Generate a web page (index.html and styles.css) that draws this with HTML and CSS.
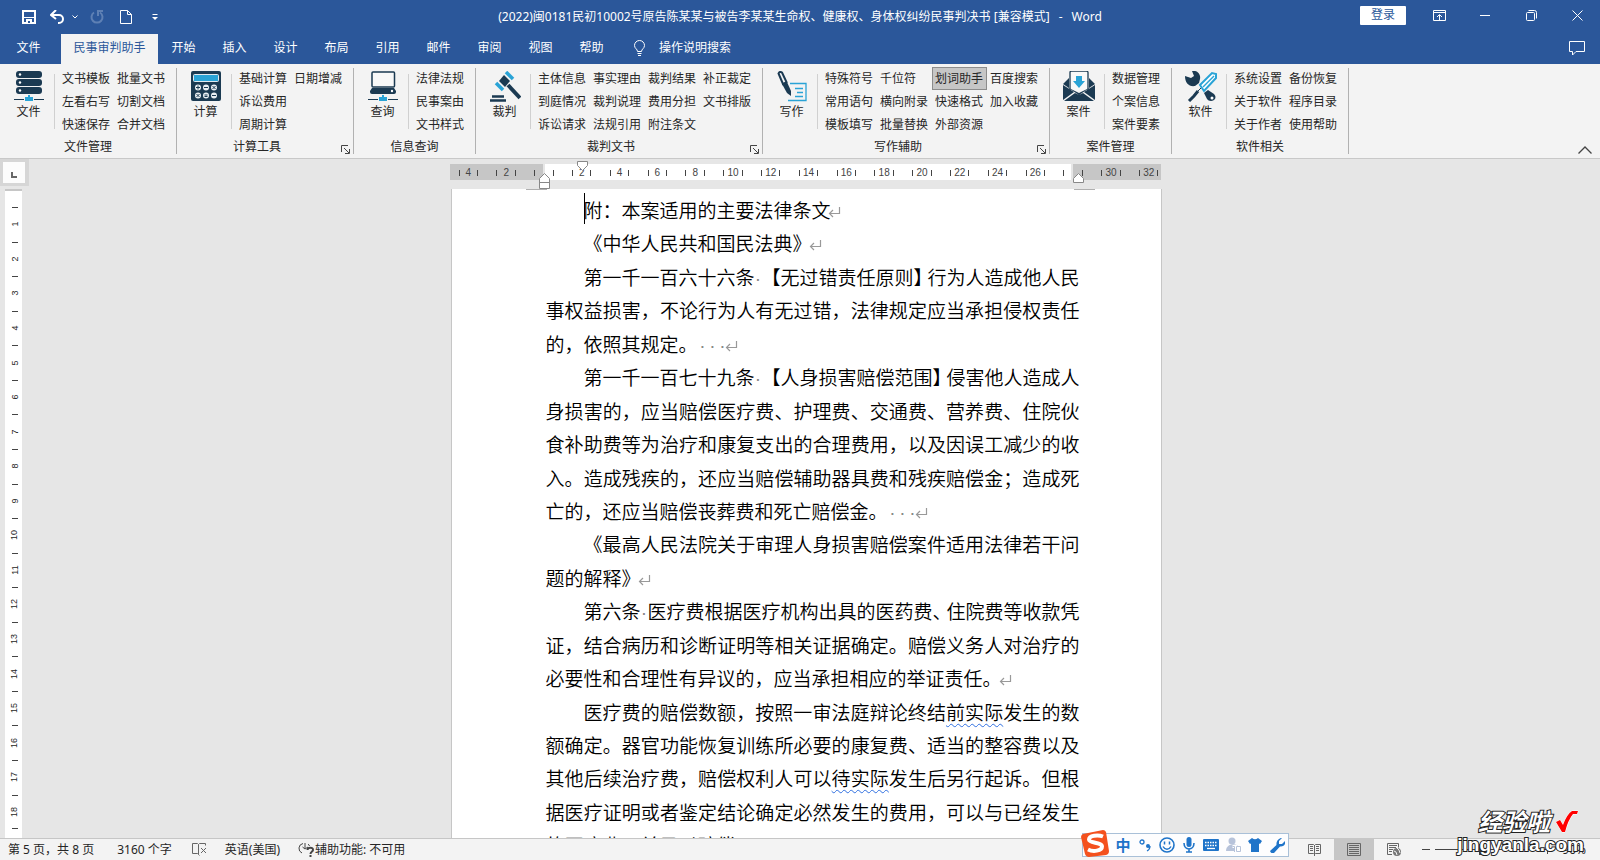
FILE: index.html
```html
<!DOCTYPE html>
<html lang="zh-CN">
<head>
<meta charset="utf-8">
<title>民事判决书 - Word</title>
<link rel="stylesheet" href="styles.css">
</head>
<body>
<svg class="defs" aria-hidden="true">
  <symbol id="ret" viewBox="0 0 13 12"><path d="M11.5 1v6.5H1.5M5 4L1.5 7.5 5 11" fill="none" stroke="#999" stroke-width="1.2"/></symbol>
  <symbol id="launch" viewBox="0 0 9 9"><path d="M.5 7V.5H7M3 3l5 5M8.500 4v4.500H4" fill="none" stroke="#444"/></symbol>
</svg>

<header class="head">
  <div class="titlebar">
    <div class="quick">
      <button class="q-save" aria-label="保存"><svg width="14" height="14" viewBox="0 0 14 14"><path d="M1 1h12v12H1z" fill="none" stroke="#fff" stroke-width="2"/><path d="M2 7.500h10" stroke="#fff"/><path d="M4 9h6v4H4z" fill="#fff"/><path d="M6 11h2v2H6z" fill="#2b579a"/></svg></button>
      <button class="q-undo" aria-label="撤消"><svg width="15" height="14" viewBox="0 0 15 14"><path d="M2 5h7a4 4 0 0 1 0 8H8" fill="none" stroke="#fff" stroke-width="2"/><path d="M6 0L1 5l5 4" fill="none" stroke="#fff" stroke-width="2"/></svg></button>
      <button class="q-drop" aria-label="撤消列表"><svg width="6" height="4" viewBox="0 0 6 4"><path d="M.5.5L3 3 5.500.5" fill="none" stroke="#fff"/></svg></button>
      <button class="q-redo" aria-label="恢复"><svg width="14" height="14" viewBox="0 0 14 14"><path d="M4 2.500A5.500 5.500 0 1 0 10 2.500" fill="none" stroke="#5e80b4" stroke-width="2"/><path d="M8 6V1h5" fill="none" stroke="#5e80b4" stroke-width="2"/></svg></button>
      <button class="q-new" aria-label="新建"><svg width="12" height="14" viewBox="0 0 12 14"><path d="M.5.5h7l4 4v9H.5zM7.500.5v4h4" fill="none" stroke="#fff"/></svg></button>
      <button class="q-more" aria-label="自定义"><svg width="6" height="6" viewBox="0 0 6 6"><path d="M.5.5h5" stroke="#fff"/><path d="M0 3h6L3 6z" fill="#fff"/></svg></button>
    </div>
    <h1 class="doc-title">(2022)闽0181民初10002号原告陈某某与被告李某某生命权、健康权、身体权纠纷民事判决书 [兼容模式]<span class="dash">-</span>Word</h1>
    <div class="window-tools">
      <button class="login">登录</button>
      <button class="win" aria-label="功能区显示选项"><svg width="13" height="11" viewBox="0 0 13 11"><path d="M.5.5h12v10H.5zM.5 2.500h12M6.500 10V5M4 7l2.500-2.500L9 7" fill="none" stroke="#fff"/></svg></button>
      <button class="win" aria-label="最小化"><svg width="10" height="11" viewBox="0 0 10 11"><path d="M0 5.500h10" stroke="#fff"/></svg></button>
      <button class="win" aria-label="还原"><svg width="11" height="11" viewBox="0 0 11 11"><rect x=".5" y="2.500" width="8" height="8" rx="1" fill="none" stroke="#fff"/><path d="M2.500.5h6a2 2 0 0 1 2 2v6" fill="none" stroke="#fff"/></svg></button>
      <button class="win" aria-label="关闭"><svg width="11" height="11" viewBox="0 0 11 11"><path d="M.5.5l10 10M10.500.5l-10 10" stroke="#fff"/></svg></button>
    </div>
  </div>
  <nav class="tabs">
    <button class="tab file">文件</button>
    <button class="tab active">民事审判助手</button>
    <button class="tab">开始</button>
    <button class="tab">插入</button>
    <button class="tab">设计</button>
    <button class="tab">布局</button>
    <button class="tab">引用</button>
    <button class="tab">邮件</button>
    <button class="tab">审阅</button>
    <button class="tab">视图</button>
    <button class="tab">帮助</button>
    <button class="tab tell"><svg width="11" height="16" viewBox="0 0 11 16"><path d="M3.500 11.500c0-2.500-3-3-3-6a5 5 0 0 1 10 0c0 3-3 3.500-3 6zM3.500 13.500h4M4 15.500h3" fill="none" stroke="#fff"/></svg>操作说明搜索</button>
    <button class="comment" aria-label="批注"><svg width="16" height="15" viewBox="0 0 16 15"><path d="M.5.5h15v10H7l-3.500 3.500v-3.500h-3z" fill="none" stroke="#fff"/></svg></button>
  </nav>
</header>

<section class="ribbon">
  <div class="group">
    <div class="tools">
      <button class="big"><svg width="30" height="31" viewBox="0 0 30 31"><g fill="#1b3a52"><rect x="2" y="0" width="26" height="7" rx="3"/><rect x="2" y="8" width="26" height="7" rx="3"/><rect x="2" y="16" width="26" height="7" rx="3"/></g><g fill="#fff"><circle cx="6" cy="3.500" r="1.200"/><circle cx="6" cy="11.500" r="1.200"/><circle cx="6" cy="19.500" r="1.200"/></g><path d="M0 28.500h10M20 28.500h10" stroke="#1b3a52"/><path d="M14 24h2v2h3v4h-8v-4h3z" fill="#29a3d6"/></svg>文件</button>
      <div class="cmds"><button>文书模板</button><button>左看右写</button><button>快速保存</button><button>批量文书</button><button>切割文档</button><button>合并文档</button></div>
    </div>
    <div class="caption"><span>文件管理</span></div>
  </div>
  <div class="group">
    <div class="tools">
      <button class="big"><svg width="30" height="31" viewBox="0 0 30 31"><rect x="0" y="0" width="30" height="30" rx="2" fill="#1b3a52"/><rect x="2.500" y="3.500" width="25" height="7" rx="1" fill="#29a3d6" stroke="#dfe9ef"/><g fill="#e8eef2"><circle cx="7" cy="16.500" r="3"/><circle cx="15" cy="16.500" r="3"/><circle cx="23" cy="16.500" r="3"/><circle cx="7" cy="24.500" r="3"/><circle cx="15" cy="24.500" r="3"/><circle cx="23" cy="24.500" r="3"/></g><path d="M5 16.500h4M7 14.500v4M13 16.500h4M21.500 15l3 3M24.500 15l-3 3M5.500 23l3 3M8.500 23l-3 3M13.500 24h3M13.500 25.500h3M21 24.500h4" stroke="#1b3a52"/></svg>计算</button>
      <div class="cmds"><button>基础计算</button><button>诉讼费用</button><button>周期计算</button><button>日期增减</button></div>
    </div>
    <div class="caption"><span>计算工具</span><button class="launch" aria-label="更多"><svg width="9" height="9"><use href="#launch"/></svg></button></div>
  </div>
  <div class="group">
    <div class="tools">
      <button class="big"><svg width="30" height="31" viewBox="0 0 30 31"><rect x="4" y="1" width="22.500" height="15" rx="1" fill="#f8f8f8" stroke="#1b3a52" stroke-width="1.500"/><path d="M4 17h22l2 3v1a2 2 0 0 1-2 2H4a2 2 0 0 1-2-2v-1z" fill="#1b3a52"/><circle cx="24" cy="20" r="1.200" fill="#fff"/><path d="M0 28.500h10M20 28.500h10" stroke="#1b3a52"/><path d="M14 24h2v2h3v4h-8v-4h3z" fill="#29a3d6"/></svg>查询</button>
      <div class="cmds"><button>法律法规</button><button>民事案由</button><button>文书样式</button></div>
    </div>
    <div class="caption"><span>信息查询</span></div>
  </div>
  <div class="group">
    <div class="tools">
      <button class="big"><svg width="32" height="31" viewBox="0 0 32 31"><path d="M17 1l7 7" stroke="#29a3d6" stroke-width="3.500"/><path d="M7 12l7 7" stroke="#29a3d6" stroke-width="3.500"/><path d="M15 4l6 6-5 6-6-6z" fill="#1b3a52"/><path d="M19 14l12 13" stroke="#1b3a52" stroke-width="4"/><path d="M3 25.500h12M1 29.500h16" stroke="#1b3a52" stroke-width="2.500"/></svg>裁判</button>
      <div class="cmds"><button>主体信息</button><button>到庭情况</button><button>诉讼请求</button><button>事实理由</button><button>裁判说理</button><button>法规引用</button><button>裁判结果</button><button>费用分担</button><button>附注条文</button><button>补正裁定</button><button>文书排版</button></div>
    </div>
    <div class="caption"><span>裁判文书</span><button class="launch" aria-label="更多"><svg width="9" height="9"><use href="#launch"/></svg></button></div>
  </div>
  <div class="group">
    <div class="tools">
      <button class="big"><svg width="30" height="31" viewBox="0 0 30 31"><path d="M1.500 2.500Q2.500 0 5 1.500L9.500 11l-3.500 2z" fill="none" stroke="#1b3a52" stroke-width="2"/><path d="M5 13l5-2 4 9v5l-4-3z" fill="#1b3a52"/><path d="M13 12.500h16v17H11M18 17.500h8M20 21.500h6M18 25.500h8" fill="none" stroke="#29a3d6" stroke-width="1.300"/></svg>写作</button>
      <div class="cmds"><button>特殊符号</button><button>常用语句</button><button>模板填写</button><button>千位符</button><button>横向附录</button><button>批量替换</button><button class="on">划词助手</button><button>快速格式</button><button>外部资源</button><button>百度搜索</button><button>加入收藏</button></div>
    </div>
    <div class="caption"><span>写作辅助</span><button class="launch" aria-label="更多"><svg width="9" height="9"><use href="#launch"/></svg></button></div>
  </div>
  <div class="group">
    <div class="tools">
      <button class="big"><svg width="32" height="31" viewBox="0 0 32 31"><path d="M0 13l6-6v10zM32 13l-6-6v10z" fill="#1b3a52"/><path d="M7 20V1.500A1.500 1.500 0 0 1 8.500 0h15A1.500 1.500 0 0 1 25 1.500V20" fill="#f8f8f8" stroke="#1b3a52" stroke-width="1.300"/><path d="M13 5h6v5h3l-6 7-6-7h3z" fill="#29a3d6"/><path d="M0 14l11 7L0 29zM32 14l-11 7 11 8zM1 30l11-8 4 2 4-2 11 8zM4 16l12 6 12-6-12 8z" fill="#1b3a52"/></svg>案件</button>
      <div class="cmds"><button>数据管理</button><button>个案信息</button><button>案件要素</button></div>
    </div>
    <div class="caption"><span>案件管理</span></div>
  </div>
  <div class="group">
    <div class="tools">
      <button class="big"><svg width="32" height="31" viewBox="0 0 32 31"><path d="M0 5l6 2 3-2-2-5c5-1 9 3 8 8l-1 4-4 3C4 16 0 12 0 5z" fill="#1b3a52"/><path d="M19 22l4-3 6 4c3 3 1 7-3 7-2 0-3-1-4-2z" fill="#1b3a52"/><circle cx="27" cy="27" r="1.500" fill="#fff"/><path d="M13 20L9 25l-5 5" stroke="#1b3a52" stroke-width="3"/><path d="M15 14L27 2l4 1v4L19 20z" fill="#fff" stroke="#29a3d6" stroke-width="2"/><path d="M18 16L29 5" stroke="#29a3d6" stroke-width="1.500"/><path d="M16 17l-4 4" stroke="#1b3a52"/></svg>软件</button>
      <div class="cmds"><button>系统设置</button><button>关于软件</button><button>关于作者</button><button>备份恢复</button><button>程序目录</button><button>使用帮助</button></div>
    </div>
    <div class="caption"><span>软件相关</span></div>
  </div>
  <button class="collapse" aria-label="折叠功能区"><svg width="14" height="8" viewBox="0 0 14 8"><path d="M.5 7.500L7 1l6.500 6.500" fill="none" stroke="#444" stroke-width="1.300"/></svg></button>
</section>

<main class="work">
  <div class="side">
    <button class="tabstop" aria-label="制表符"><svg width="6" height="6" viewBox="0 0 6 6"><path d="M1 0v5h5" fill="none" stroke="#666" stroke-width="2"/></svg></button>
    <div class="vruler"><div><span>1</span></div><div><span>2</span></div><div><span>3</span></div><div><span>4</span></div><div><span>5</span></div><div><span>6</span></div><div><span>7</span></div><div><span>8</span></div><div><span>9</span></div><div><span>10</span></div><div><span>11</span></div><div><span>12</span></div><div><span>13</span></div><div><span>14</span></div><div><span>15</span></div><div><span>16</span></div><div><span>17</span></div><div><span>18</span></div></div>
  </div>
  <div class="canvas">
    <div class="hruler">
      <div class="scale"><div class="cells"><span>4</span><span>2</span><span class="zero"></span><span>2</span><span>4</span><span>6</span><span>8</span><span>10</span><span>12</span><span>14</span><span>16</span><span>18</span><span>20</span><span>22</span><span>24</span><span>26</span><span></span><span>30</span><span>32</span></div></div>
      <svg class="mark first" width="11" height="10" viewBox="0 0 11 10"><path d="M.5.5h10v4l-5 5-5-5z" fill="#fff" stroke="#888"/></svg>
      <svg class="mark left" width="11" height="16" viewBox="0 0 11 16"><path d="M.5 15.500v-10l5-5 5 5v10zM.5 9.500h10" fill="#fff" stroke="#888"/></svg>
      <svg class="mark right" width="11" height="10" viewBox="0 0 11 10"><path d="M.5 9.500v-4l5-5 5 5v4z" fill="#fff" stroke="#888"/></svg>
    </div>
    <article class="page">
      <i class="corner cl"></i><i class="corner cr"></i><i class="caret"></i>
      <p><span class="line">附：本案适用的主要法律条文<svg class="ret"><use href="#ret"/></svg></span></p>
      <p><span class="line">《中华人民共和国民法典》<svg class="ret"><use href="#ret"/></svg></span></p>
      <p><span class="line full">第一千一百六十六条<b class="sp">·</b>【无过错责任原则<b class="tight">】</b>行为人造成他人民</span><span class="line full">事权益损害，不论行为人有无过错，法律规定应当承担侵权责任</span><span class="line">的，依照其规定。<b class="sp">·</b><b class="sp">·</b><b class="sp">·</b><svg class="ret"><use href="#ret"/></svg></span></p>
      <p><span class="line full">第一千一百七十九条<b class="sp">·</b>【人身损害赔偿范围<b class="tight">】</b>侵害他人造成人</span><span class="line full">身损害的，应当赔偿医疗费、护理费、交通费、营养费、住院伙</span><span class="line full">食补助费等为治疗和康复支出的合理费用，以及因误工减少的收</span><span class="line full">入。造成残疾的，还应当赔偿辅助器具费和残疾赔偿金；造成死</span><span class="line">亡的，还应当赔偿丧葬费和死亡赔偿金。<b class="sp">·</b><b class="sp">·</b><b class="sp">·</b><svg class="ret"><use href="#ret"/></svg></span></p>
      <p><span class="line full">《最高人民法院关于审理人身损害赔偿案件适用法律若干问</span><span class="line">题的解释》<svg class="ret"><use href="#ret"/></svg></span></p>
      <p><span class="line full">第六条<b class="sp">·</b>医疗费根据医疗机构出具的医药费<b class="tight">、</b>住院费等收款凭</span><span class="line full">证，结合病历和诊断证明等相关证据确定。赔偿义务人对治疗的</span><span class="line">必要性和合理性有异议的，应当承担相应的举证责任。<svg class="ret"><use href="#ret"/></svg></span></p>
      <p><span class="line full">医疗费的赔偿数额，按照一审法庭辩论终结<u>前实际</u>发生的数</span><span class="line full">额确定。器官功能恢复训练所必要的康复费、适当的整容费以及</span><span class="line full">其他后续治疗费，赔偿权利人可以<u>待实际</u>发生后另行起诉。但根</span><span class="line full">据医疗证明或者鉴定结论确定必然发生的费用，可以与已经发生</span><span class="line">的医疗费一并予以赔偿。</span></p>
    </article>
  </div>
</main>

<footer class="status">
  <span class="s-page">第 5 页，共 8 页</span>
  <span class="s-words">3160 个字</span>
  <button class="s-proof" aria-label="校对"><svg width="15" height="13" viewBox="0 0 15 13"><path d="M6.500 1.500v10l-1-1h-5V.5h5zM6.500 1.500l1-1h6v2M6.500 11.500l1 1M9 5l5 5M14 5l-5 5" fill="none" stroke="#666"/></svg></button>
  <span class="s-lang">英语(美国)</span>
  <span class="s-acc"><svg width="17" height="15" viewBox="0 0 17 15"><path d="M5 1.500A5 5 0 0 0 4 11M7 1v5M4.500 5L7 7l3-2M10 2a5 5 0 0 1 1.500 2" fill="none" stroke="#444"/><path d="M9.500 8c0-3 6-3 5.500 0-.3 2-2.500 1.500-2.500 4M12.500 13v2" fill="none" stroke="#444" stroke-width="2"/></svg>辅助功能: 不可用</span>
  <div class="views">
    <button aria-label="阅读视图"><svg width="13" height="13" viewBox="0 0 13 13"><path d="M.5 1.500h5l1 1 1-1h5v9h-5l-1 1-1-1h-5zM6.500 2v11M2 3.500h3M2 5.500h3M2 7.500h3M8 3.500h3M8 5.500h3M8 7.500h3" fill="none" stroke="#666"/></svg></button>
    <button class="sel" aria-label="页面视图"><svg width="14" height="13" viewBox="0 0 14 13"><path d="M.5.5h13v12H.5zM2 2.500h10M2 4.500h10M2 6.500h10M2 8.500h10M2 10.500h10" fill="none" stroke="#666"/></svg></button>
    <button aria-label="Web 版式"><svg width="14" height="13" viewBox="0 0 14 13"><path d="M5 11.500H.5V.5h11v4M2 2.500h8M2 4.500h7M2 6.500h4M2 8.500h3" fill="none" stroke="#666"/><circle cx="10" cy="9" r="4" fill="#777"/><path d="M7 8l2 1 1 3M10 5l2 2 1 3" fill="none" stroke="#f3f3f3"/></svg></button>
  </div>
  <div class="zoom"><button aria-label="缩小"><svg width="8" height="8" viewBox="0 0 8 8"><path d="M0 3.500h8" stroke="#444"/></svg></button><input type="range" min="10" max="190" value="90" aria-label="显示比例"><button aria-label="放大"><svg width="8" height="8" viewBox="0 0 8 8"><path d="M0 3.500h8M3.500 0v8" stroke="#444"/></svg></button><span>90%</span></div>
</footer>

<div class="ime">
  <svg class="sogou" width="30" height="29" viewBox="0 0 30 29"><path d="M3 5l20-4q2 0 3 2l3 19q0 3-3 4L9 28q-3 0-4-3L1 8q0-2 2-3z" fill="#f4511e"/><path d="M23 7.500c-5-2-14-1-14 3s13 2.500 13 7-9 5.500-14 3" fill="none" stroke="#fff" stroke-width="4"/></svg>
  <button class="zh">中</button>
  <button aria-label="标点"><svg width="12" height="14" viewBox="0 0 12 14"><circle cx="3" cy="4" r="2" fill="none" stroke="#1f74c9" stroke-width="1.300"/><circle cx="9" cy="8" r="2" fill="#1f74c9"/><path d="M11 8c0 3-1 4-3 5" stroke="#1f74c9" fill="none" stroke-width="1.300"/></svg></button>
  <button aria-label="表情"><svg width="16" height="16" viewBox="0 0 16 16"><circle cx="8" cy="8" r="7" fill="none" stroke="#1f74c9" stroke-width="1.600"/><path d="M5.500 4.500v3M10.500 4.500v3M4 9.500c2 3.500 6 3.500 8 0" fill="none" stroke="#1f74c9" stroke-width="1.500"/></svg></button>
  <button aria-label="语音"><svg width="12" height="16" viewBox="0 0 12 16"><rect x="3.500" y="0" width="5" height="10" rx="2.500" fill="#1f74c9"/><path d="M1 6c0 8 10 8 10 0M6 12v3M3 15h6" fill="none" stroke="#1f74c9" stroke-width="1.600"/></svg></button>
  <button aria-label="键盘"><svg width="16" height="12" viewBox="0 0 16 12"><rect width="16" height="12" rx="1" fill="#1f74c9"/><path d="M2 3.500h12M2 6.500h12" stroke="#fff" stroke-width="1.500" stroke-dasharray="1.500 1"/><path d="M4 9.500h8" stroke="#fff" stroke-width="1.300"/></svg></button>
  <button aria-label="账户"><svg width="17" height="16" viewBox="0 0 17 16"><circle cx="7" cy="4" r="3.500" fill="#b7c3da"/><path d="M1 14c0-8 12-8 12-4v4z" fill="#b7c3da"/><path d="M7.500 9.500h3v5M12.500 9v6h3.500V9.500" fill="none" stroke="#fff" stroke-width="3"/><path d="M7.500 9.500h2v5.500M11.500 9.500h4v5h-4z" fill="none" stroke="#b7c3da"/></svg></button>
  <button aria-label="皮肤"><svg width="14" height="14" viewBox="0 0 14 14"><path d="M4 0q3 2.500 6 0l4 3-2 3-1-.5V14H3V5.500L2 6 0 3z" fill="#1f74c9"/></svg></button>
  <button aria-label="工具"><svg width="15" height="15" viewBox="0 0 15 15"><path d="M12 0L9 3v3h3l3-3c1 4-2 6-5 5.500L4 15q-3 1-4-2l6.500-6C6 3 9 0 12 0z" fill="#1f74c9"/></svg></button>
</div>

<div class="brand">
  <div class="brand-cn">经验啦<svg width="24" height="24" viewBox="0 0 24 24"><path d="M1 12l4-2 3 5Q12 4 17 1h6l-1 3h-4q-5 6-8 18H7z" fill="#f00" stroke="#fff"/></svg></div>
  <div class="brand-url">jingyanla.com</div>
</div>
</body>
</html>
```
FILE: styles.css
```css
* { box-sizing: border-box; }
body {
  margin: 0;
  height: 100vh;
  display: flex;
  flex-direction: column;
  position: relative;
  overflow: hidden;
  background: #e6e6e6;
  font: 12px/16px "Noto Sans", "Noto Sans CJK SC", sans-serif;
  color: #262626;
}
button {
  border: 0;
  padding: 0;
  background: none;
  font: inherit;
  color: inherit;
  white-space: nowrap;
}
svg { display: block; flex: none; }
.defs { position: absolute; width: 0; height: 0; }

/* title bar and tabs */
.head { background: #2b579a; color: #fff; flex: none; }
.titlebar { height: 34px; display: grid; grid-template-columns: 1fr auto 1fr; }
.quick { display: flex; align-items: center; padding-left: 22px; }
.q-undo { margin-left: 14px; }
.q-drop { margin-left: 7px; }
.q-redo { margin-left: 12px; }
.q-new { margin-left: 16px; }
.q-more { margin-left: 20px; }
.doc-title { margin: 0; font-size: 12px; font-weight: 400; line-height: 34px; white-space: nowrap; }
.dash { margin: 0 9px; }
.window-tools { display: flex; justify-content: flex-end; align-items: center; padding-bottom: 4px; }
.login { width: 46px; height: 19px; margin-right: 10px; background: #fff; color: #2b579a; border-radius: 1px; }
.win { width: 46px; height: 30px; display: flex; align-items: center; justify-content: center; }
.tabs { display: flex; height: 30px; }
.tab { width: 51px; padding-bottom: 2px; }
.tab.file { width: 61px; padding: 0 4px 2px 0; }
.tab.active { width: 97px; background: #f3f3f3; color: #2b579a; }
.tab.tell { width: auto; display: flex; align-items: center; gap: 14px; margin-left: 17px; }
.comment { margin-left: auto; padding: 0 15px 2px 0; }

/* ribbon */
.ribbon { flex: none; display: flex; height: 95px; background: #f3f3f3; border-bottom: 1px solid #c8c8c8; }
.group { display: flex; flex-direction: column; padding-top: 3px; position: relative; padding-right: 8px; }
.group::after { content: ""; position: absolute; right: 0; top: 4px; bottom: 4px; width: 1px; background: #b1b1b1; }
.tools { display: flex; height: 69px; }
.big { width: 54px; padding: 4px 0 0 3px; display: flex; flex-direction: column; align-items: center; gap: 2px; }
.cmds {
  position: relative;
  display: grid;
  grid-template-rows: repeat(3, 23px);
  grid-auto-flow: column;
  grid-auto-columns: 55px;
  padding-left: 5px;
}
.cmds::before { content: ""; position: absolute; left: 0; top: 7px; height: 55px; width: 1px; background: #d0d0d0; }
.cmds button { text-align: left; padding: 1px 2px 0; border: 1px solid transparent; }
.cmds .on { background: #c6c6c6; border-color: #8c8c8c; }
.caption { display: flex; align-items: center; height: 24px; margin-right: -7px; }
.caption span { flex: 1; text-align: center; }
.launch { padding: 4px 3px 0 4px; }
.collapse { margin-left: auto; align-self: flex-end; padding: 0 8px 4px 0; }

/* workspace */
.work { flex: 1; min-height: 0; display: flex; }
.side { width: 29px; display: flex; flex-direction: column; background: #e6e6e6; }
.tabstop { width: 29px; height: 27px; border: 3px solid #d6d6d6; border-width: 3px 4px 3px 3px; background: #fcfcfc; display: flex; align-items: center; justify-content: center; padding-top: 4px; }
.vruler {
  flex: 1;
  min-height: 0;
  width: 17px;
  margin: 3px 0 0 5px;
  padding: 16px 0 9px;
  border-top: 2px solid #c6c6c6;
  background: #fff;
  display: flex;
  flex-direction: column;
}
.vruler div { flex: 1; display: flex; align-items: center; justify-content: center; padding-left: 2px; background: linear-gradient(#444, #444) 7px 0 / 6px 1px no-repeat; }
.vruler div:last-child { background: linear-gradient(#444, #444) 7px 0 / 6px 1px no-repeat, linear-gradient(#444, #444) 7px 100% / 6px 1px no-repeat; }
.vruler span { font: 9px/12px "Liberation Sans", sans-serif; transform: rotate(-90deg); }

.canvas { flex: 1; display: flex; flex-direction: column; align-items: center; padding-right: 17px; }
.hruler { position: relative; width: 711px; height: 30px; margin-right: 2px; padding-top: 5px; flex: none; }
.scale { height: 16px; overflow: hidden; background: linear-gradient(90deg, #c6c6c6 93px, #e6e6e6 93px 95px, #fff 95px 621px, #e6e6e6 621px 623px, #c6c6c6 623px); }
.cells { width: 101%; height: 100%; display: flex; }
.cells span {
  flex: 1;
  text-align: center;
  color: #444;
  font: 10px/18px "Liberation Sans", sans-serif;
  background: linear-gradient(#444, #444) 25% 6px / 1px 6px no-repeat, linear-gradient(#444, #444) 75% 6px / 1px 6px no-repeat;
}
.mark { position: absolute; }
.mark.first { left: 127px; top: 2px; }
.mark.left { left: 89px; top: 14px; }
.mark.right { left: 623px; top: 14px; }

.page {
  position: relative;
  flex: 1;
  min-height: 0;
  overflow: hidden;
  width: 711px;
  padding: 4px 81px 0 94px;
  background: #fff;
  border: 1px solid #c6c6c6;
  border-width: 0 1px;
  color: #000;
  font: 19px/1.76 "Noto Sans CJK SC", sans-serif;
  font-weight: 350;
}
.page p { margin: 0; }
.line { display: block; white-space: nowrap; }
.line:first-child { text-indent: 2em; }
.line.full { text-align: justify; text-align-last: justify; }
.line b { font-weight: 350; }
.line .sp { display: inline-block; width: 10px; text-indent: 0; text-align: center; text-align-last: center; color: #888; font-family: "Liberation Sans", sans-serif; line-height: 20px; }
.line.full .sp { width: 7px; }
.tight { margin-right: -5px; }
.ret { display: inline-block; width: 13px; height: 12px; margin-left: -3px; }
.page u { text-decoration: underline wavy #2f6fe0 1px; text-underline-offset: 3px; }
.caret { position: absolute; left: 132px; top: 4px; width: 1px; height: 31px; background: #000; }
.corner { position: absolute; top: 0; width: 21px; height: 1px; background: #b0b0b0; }
.cl { left: 74px; }
.cr { right: 66px; }

/* status bar */
.status { flex: none; height: 22px; display: flex; align-items: center; border-top: 1px solid #c6c6c6; background: #f3f3f3; padding-left: 8px; white-space: nowrap; }
.s-words { margin-left: 23px; }
.s-proof { margin-left: 20px; }
.s-lang { margin-left: 18px; }
.s-acc { display: flex; align-items: center; margin-left: 18px; }
.views { display: flex; align-self: stretch; margin-left: auto; }
.views button { width: 40px; display: flex; align-items: center; justify-content: center; }
.views .sel { background: #c6c6c6; }
.zoom { display: flex; align-items: center; margin: 0 14px 0 5px; }
.zoom button { width: 14px; display: flex; justify-content: center; }
.zoom input { appearance: none; width: 104px; height: 14px; margin: 0 2px; background: linear-gradient(#444, #444) center / 100% 1px no-repeat; }
.zoom input::-webkit-slider-thumb { appearance: none; width: 5px; height: 11px; background: #444; }
.zoom span { margin-left: 7px; }

/* input method bar */
.ime {
  position: absolute;
  right: 311px;
  bottom: 3px;
  height: 24px;
  display: flex;
  align-items: center;
  border: 1px solid #a9c0d8;
  background: #fdfdfe;
}
.sogou { margin: -4px 2px 0 -3px; }
.ime button { width: 22px; height: 22px; display: flex; align-items: center; justify-content: center; }
.ime .zh { font-size: 15px; font-weight: 700; color: #1f74c9; }

.brand { position: absolute; right: 16px; bottom: 4px; color: #fff; text-align: right; font-weight: 700; paint-order: stroke; -webkit-text-stroke: 2px #222; }
.brand-cn { display: flex; justify-content: flex-end; align-items: center; gap: 5px; padding-right: 5px; font-size: 24px; line-height: 24px; font-style: italic; }
.brand-url { font: 700 19px/22px "Liberation Sans", sans-serif; }
```
